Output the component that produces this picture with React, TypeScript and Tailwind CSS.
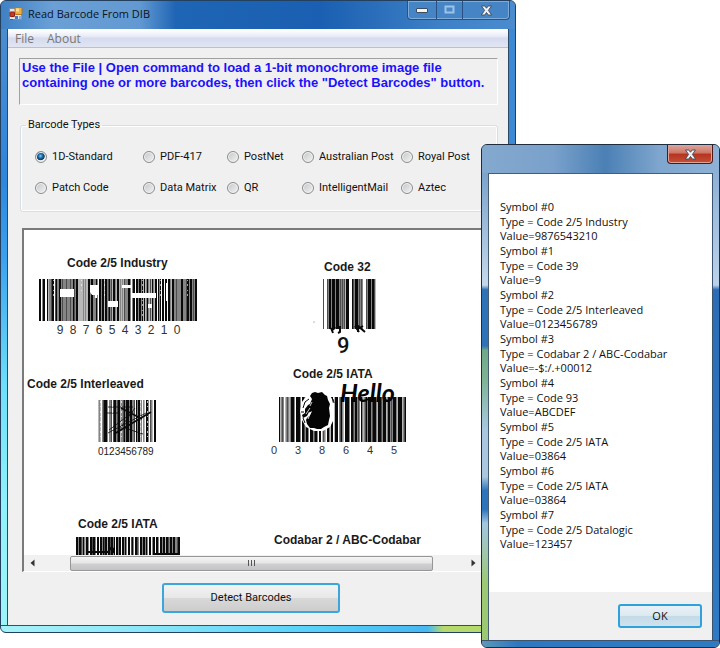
import { useState } from "react"
import { clsx } from "clsx"

const barcodeTypes = [
  "1D-Standard",
  "PDF-417",
  "PostNet",
  "Australian Post",
  "Royal Post",
  "Patch Code",
  "Data Matrix",
  "QR",
  "IntelligentMail",
  "Aztec"
]

const symbols = [
  { type: "Code 2/5 Industry", value: "9876543210" },
  { type: "Code 39", value: "9" },
  { type: "Code 2/5 Interleaved", value: "0123456789" },
  { type: "Codabar 2 / ABC-Codabar", value: "-$:/.+00012" },
  { type: "Code 93", value: "ABCDEF" },
  { type: "Code 2/5 IATA", value: "03864" },
  { type: "Code 2/5 IATA", value: "03864" },
  { type: "Code 2/5 Datalogic", value: "123457" }
]

// one character per column: # black, = dark grey, + grey, - light grey
const shades: Record<string, string> = {
  "#": "#0a0a0a",
  "=": "#4d4d4d",
  "+": "#858585",
  "-": "#b8b8b8"
}

const industry =
  "## +##  #-++=## =#++##+=+++=+++=++#=+##-----+-+--##+##+++#+ ##+##-##+=#+=-##+-##-+-+-=+++##+ +## ##+##+#-#-+#+-=-#+-## #+# ## ## ##+-##++=++++##+++=##+##+=+##"
const code32 = "=   =+##+###+###+=+=+=-###   #=+###+=+=+   =+###+##=-"
const interleaved = "-+- +=###+ ++= =##+=##-++=#+###+##++= #+##-+ +- ##+ =+- ##"
const iata =
  "#-+=+ -+=+-+###+ ####+ ##=+##+ ###+=##+ ## -=+- ##+-## -### +=#+- ####+ ##=+##+=+ #+-+=#+###+=###+-###=+###-+##+=+###+-####-+=#"
const iataBottom =
  "##+##=+#+-##+ ##=##+ ## ##+#=##-##=##+# ##+## ##+#+ ## =#+ ##=+ ##+##+#+ ## +## ##+ ##+##-##=+##+##++=##"

type BarcodeProps = { x: number; y: number; height: number; columns: string }

function Barcode({ x, y, height, columns }: BarcodeProps) {
  return (
    <g shapeRendering="crispEdges">
      {columns.split("").map((column, i) =>
        shades[column] ? (
          <rect key={i} x={x + i} y={y} width={1} height={height} fill={shades[column]} />
        ) : null
      )}
    </g>
  )
}

type DigitsProps = { value: string; x: number; y: number; step: number; size: number }

function Digits({ value, x, y, step, size }: DigitsProps) {
  return (
    <g fontSize={size} textAnchor="middle" fill="#333">
      {value.split("").map((digit, i) => (
        <text key={i} x={x + i * step} y={y}>
          {digit}
        </text>
      ))}
    </g>
  )
}

function ScannedPage() {
  return (
    <svg
      width={457}
      height={325}
      viewBox="0 0 457 325"
      className="block font-['Liberation_Sans',sans-serif]"
      role="img"
      aria-label="Barcodes"
    >
      <g fontSize={12} fontWeight="bold" fill="#1a1a1a">
        <text x={43} y={37}>Code 2/5 Industry</text>
        <text x={300} y={41}>Code 32</text>
        <text x={3} y={158}>Code 2/5 Interleaved</text>
        <text x={269} y={148}>Code 2/5 IATA</text>
        <text x={54} y={298}>Code 2/5 IATA</text>
        <text x={250} y={314}>Codabar 2 / ABC-Codabar</text>
      </g>

      <Barcode x={15} y={49} height={42} columns={industry} />
      <path
        fill="#fff"
        d="M36 59h14v8h-14zM66 55h9v10h-2v3h-2v-3h-3l-2-3zM84 71h10v6h-10zM98 55h10v3h-10zM108 63h24v5h-24zM124 74h4v4h-4zM142 53h2v18h-2z"
      />
      <path
        stroke="#fff"
        strokeDasharray="1 3 2 4"
        opacity={0.6}
        d="M29.5 50v20M57.5 50v14M80.5 50v16M118.500 50v40M136.500 50v20M163.500 50v16"
      />
      <Digits value="9876543210" x={36} y={104} step={13} size={12} />

      <Barcode x={299} y={49} height={50} columns={code32} />
      <path
        fill="none"
        stroke="#0a0a0a"
        strokeWidth={2}
        d="M307 98l2 5M311 97l-2 3M316 96v6l-2 1M331 96l4 6M334 102v-6l7 6M334 99l5-3"
      />
      <circle cx={290} cy={92} r={0.5} fill="#444" />
      <text x={313} y={123} fontSize={22} className="font-['Roboto',sans-serif]" fontWeight={500} fill="#111">
        9
      </text>

      <Barcode x={74} y={170} height={42} columns={interleaved} />
      <g fill="none" stroke="#0a0a0a">
        <path strokeWidth={1.5} d="M90 204l37-22M97 178l21 11" />
        <path strokeWidth={0.8} d="M84 177h25M83 183h12M85 200l24-18M84 203l38-20M101 198l18 6M111 178l-16 22" />
      </g>
      <path
        stroke="#fff"
        strokeDasharray="2 3 1 4"
        opacity={0.7}
        d="M76.500 171v40M88.500 171v40M97.500 171v40M116.500 171v40M123.500 171v40"
      />
      <text x={74} y={225} fontSize={10} fill="#222">0123456789</text>

      <Barcode x={255} y={167} height={45} columns={iata} />
      <path fill="#fff" d="M283 165l-5 7-2 9 2 9 4 7 8 4 9 0 7-4 4-8 0-11-2-9-3-5z" />
      <path
        fill="#050505"
        d="M288 163l3-1 3 1 4-1 3 3 2 1 1 4 2 4-1 4 1 8-1 4-1 5-4 2-3 2-4 0-3-1-4 0-3-4-1-4 1-2 3-3 2-4-3 1-2 4-4 2-1-3 3-2 0-4 3-4 2-1 2-5-2-3z"
      />
      <path
        fill="none"
        stroke="#050505"
        d="M279 178l2-6 4-3M277 182h3M279 188l2 5M285 182l4-2M309 169l1 4"
      />
      <path stroke="#fff" strokeWidth={0.8} d="M282 184l4-6M284 189l3-7M286 176l2-4" />
      <text
        x={316}
        y={172}
        fontSize={25}
        fontStyle="italic"
        fontWeight="bold"
        className="font-['Lato',sans-serif]"
        fill="#050505"
      >
        Hello
      </text>
      <Digits value="038645" x={250} y={224} step={24} size={11} />

      <Barcode x={52} y={307} height={18} columns={iataBottom} />
      <path fill="none" stroke="#0a0a0a" strokeWidth={2} d="M64 322h20l3-4 3 1v4M130 324h25" />
    </svg>
  )
}

function CloseGlyph() {
  return (
    <svg width={13} height={11} viewBox="0 0 13 11" aria-hidden="true">
      <path
        d="M1.500 1h3.300l1.700 2.200L8.200 1h3.300L8.400 5.400l3.300 4.600H8.300L6.500 7.500 4.700 10H1.300l3.300-4.600z"
        fill="#f2f2f2"
        stroke="#3c4a5c"
        strokeWidth={0.9}
      />
    </svg>
  )
}

function AppIcon() {
  return (
    <svg width={14} height={14} viewBox="0 0 14 14" aria-hidden="true">
      <rect x={0.5} y={1.5} width={12} height={11} fill="#dfe6ee" stroke="#7d8ea3" />
      <rect x={6} y={0.5} width={7} height={7} rx={1} fill="#f0b040" stroke="#b87418" />
      <rect x={7} y={1.5} width={3} height={3} fill="#fbe09a" />
      <rect x={1} y={5} width={4.5} height={4.5} rx={0.5} fill="#c93a24" stroke="#8c2012" />
      <rect x={6} y={9} width={3} height={3} fill="#4877c4" />
      <rect x={10} y={9} width={2.5} height={3} fill="#8fb0dd" />
      <path d="M1 12.500h3" stroke="#3b62a8" />
    </svg>
  )
}

function MainWindow() {
  const [selected, setSelected] = useState("1D-Standard")

  return (
    <main className="mr-[204px] flex flex-col overflow-hidden rounded-md border border-[#24405f] bg-[#3f8bd0]">
      <header className="flex h-7 items-start bg-[linear-gradient(to_right,#3f80c4,#6ba0d6_10%,#6299d2_27%,#1f65b5_34%,#1a5fb1_62%,#3d80c6_85%,#4a8cce)] pl-2">
        <h1 className="flex h-[26px] flex-1 items-center gap-[5px] font-['Open_Sans',sans-serif] text-[11px] text-[#0b1420]">
          <AppIcon />
          Read Barcode From DIB
        </h1>
        <div className="mr-[5px] flex h-[19px] rounded-b-[4px] border border-t-0 border-[#2a5184] bg-[#4585c6] shadow-[inset_0_0_0_1px_#7fabd8]">
          <button aria-label="Minimize" className="flex w-[29px] items-center justify-center border-r border-[#2a5184]">
            <svg width={13} height={6} viewBox="0 0 13 6" aria-hidden="true">
              <rect x={0.5} y={1.5} width={11} height={4} rx={0.5} fill="#f5f3ee" stroke="#3e4c60" />
            </svg>
          </button>
          <button aria-label="Maximize" className="flex w-[26px] items-center justify-center border-r border-[#2a5184]">
            <svg width={11} height={10} viewBox="0 0 11 10" aria-hidden="true">
              <rect x={1.5} y={1.5} width={8} height={6} fill="#4a87c4" stroke="#9cc3e8" strokeWidth={2} />
            </svg>
          </button>
          <button aria-label="Close" className="flex w-[46px] items-center justify-center">
            <CloseGlyph />
          </button>
        </div>
      </header>

      <div className="flex">
        <div className="w-[7px] border-r border-[#2b4a68] bg-[linear-gradient(to_bottom,#4a8ccf,#2f86dc_25%,#3aa0ee_38%,#6de0fa_60%,#8ff2fb_80%,#9df4f8)]" />
        <div className="min-w-0 flex-1 bg-[#f0f0f0] pb-3">
          <nav className="flex h-[19px] items-center gap-[13px] border-y border-t-white border-b-[#b9c0d6] bg-[linear-gradient(to_bottom,#fff,#e9ecf7_35%,#d6dbee_50%,#e1e5f3)] pl-[7px] font-['Open_Sans',sans-serif] text-[12px] text-[#777]">
            <button>File</button>
            <button>About</button>
          </nav>

          <p className="mt-[10px] mr-[10px] ml-[11px] h-[47px] border border-t-[#a0a0a0] border-r-white border-b-white border-l-[#a0a0a0] pt-px pl-[2px] font-['Liberation_Sans',Arial,sans-serif] text-[13px] leading-[15px] font-bold text-[#1c10ff]">
            Use the File | Open command to load a 1-bit monochrome image file
            <br />
            containing one or more barcodes, then click the "Detect Barcodes" button.
          </p>

          <fieldset className="mt-3 mr-[10px] ml-3 rounded-[3px] border border-[#d5dfe5] pb-[15px] font-['Roboto',sans-serif] text-[11px] text-[#111] shadow-[inset_0_0_0_1px_#fff]">
            <legend className="ml-[5px] px-[2px] leading-4">Barcode Types</legend>
            <div className="grid grid-cols-[108px_84px_75px_99px_1fr] gap-y-[15px] pt-4 pl-[14px]">
              {barcodeTypes.map((type) => (
                <label key={type} className="flex h-4 items-center gap-[5px] whitespace-nowrap">
                  <input
                    type="radio"
                    name="barcodeType"
                    checked={selected === type}
                    onChange={() => setSelected(type)}
                    className={clsx(
                      "size-3 shrink-0 appearance-none rounded-full border border-[#8a8c8e] shadow-[inset_0_0_0_1px_#f4f4f4]",
                      selected === type
                        ? "bg-[radial-gradient(circle_at_45%_40%,#7fd0f5_0,#1d6fae_25%,#12395c_48%,#e4e8ea_56%)]"
                        : "bg-[linear-gradient(135deg,#c4c6c8,#f3f3f3)]"
                    )}
                  />
                  {type}
                </label>
              ))}
            </div>
          </fieldset>

          <div className="mt-4 ml-[14px] border-t-2 border-b border-l-2 border-[#7a7a7a] border-b-white bg-white">
            <div className="overflow-hidden">
              <ScannedPage />
            </div>
            <div className="flex h-4 items-center bg-[#f1f1f1] pr-8">
              <button aria-label="Scroll left" className="flex w-[46px] pl-[6px]">
                <svg width={5} height={8} viewBox="0 0 5 8" aria-hidden="true">
                  <path d="M4.500 0.500v7L0.500 4z" fill="#333" />
                </svg>
              </button>
              <div className="flex h-[15px] min-w-0 flex-1 items-center justify-center gap-[2px] rounded-[2px] border border-[#969696] bg-[linear-gradient(to_bottom,#f4f4f4,#e6e6e6_48%,#d0d0d2_52%,#c3c4c6)]">
                <span className="h-[6px] w-px bg-[#555]" />
                <span className="h-[6px] w-px bg-[#555]" />
                <span className="h-[6px] w-px bg-[#555]" />
              </div>
              <button aria-label="Scroll right" className="flex w-[43px] justify-end">
                <svg width={5} height={8} viewBox="0 0 5 8" aria-hidden="true">
                  <path d="M0.500 0.500v7l4-3.500z" fill="#333" />
                </svg>
              </button>
            </div>
          </div>

          <div className="mt-[11px] flex justify-center pr-[14px]">
            <button className="h-[30px] w-[178px] rounded-[3px] border-2 border-[#3ba6dc] bg-[linear-gradient(to_bottom,#f3f3f3,#e8e8e8_48%,#d8d8d8_52%,#cdcdcd)] font-['Roboto',sans-serif] text-[11px] text-[#111]">
              Detect Barcodes
            </button>
          </div>
        </div>
        <div className="w-[7px] border-l border-[#2b4a68] bg-[#3d8ad2]" />
      </div>
      <div className="h-[7px] border-t border-[#2b5468] bg-[linear-gradient(to_right,#a5f3f8,#8fe8f8_25%,#58d2fa_60%,#46b8f2_83%,#b5d96b_86%,#b5d96b)]" />
    </main>
  )
}

function ResultDialog() {
  return (
    <div
      role="dialog"
      aria-label="Detected symbols"
      className="absolute top-36 right-0 flex w-[239px] flex-col overflow-hidden rounded-md border border-[#1f2c3d] bg-[#7ba3cc]"
    >
      <div className="flex h-7 items-start justify-end bg-[linear-gradient(to_right,#84a9cf,#7aa1cb_30%,#4b80b5_52%,#7fa6ce_75%,#8fb1d6)] pr-[6px]">
        <button
          aria-label="Close"
          className="flex h-[19px] w-[46px] items-center justify-center rounded-b-[4px] border border-t-0 border-[#4a1a1a] bg-[linear-gradient(to_bottom,#dba59c,#cf7566_45%,#b5331f_50%,#c4513a)] shadow-[inset_0_0_0_1px_#e0a398]"
        >
          <CloseGlyph />
        </button>
      </div>

      <div className="flex">
        <div className="w-[7px] border-r border-[#4a5d70] bg-[linear-gradient(to_bottom,#7ba3cc,#c5d9ea_24%,#2e72b8_25%,#2e72b8_37%,#6fa98a_38%,#7db393_44%,#a9c8e0_55%,#a9c8e0_65%,#2c74bc_68%,#2c74bc_72%,#a3c6e0_75%,#9cc873_88%,#9cc873)]" />
        <div className="min-w-0 flex-1 border-t border-[#4a5d70] bg-white font-['Open_Sans',sans-serif] text-[11px] text-[#111]">
          <ul className="px-[11px] pt-[25px] pb-[41px]">
            {symbols.map((symbol, i) => (
              <li key={i} className="leading-[15px] whitespace-nowrap">
                <p>Symbol #{i}</p>
                <p>Type = {symbol.type}</p>
                <p className="leading-[14px]">Value={symbol.value}</p>
              </li>
            ))}
          </ul>
          <div className="flex justify-end bg-[#f0f0f0] px-[10px] py-3">
            <button className="h-6 w-[84px] rounded-[3px] border-2 border-[#2fa2dc] bg-[linear-gradient(to_bottom,#e9f2f7,#dce9f0_48%,#c4dbe7_52%,#cfe2ec)]">
              OK
            </button>
          </div>
        </div>
        <div className="w-[7px] border-l border-[#3a5470] bg-[linear-gradient(to_bottom,#8fb1d6,#bcd2ea_24%,#2a6db5_25%,#2f7ac2)]" />
      </div>
      <div className="h-[7px] border-t border-[#3a5470] bg-[linear-gradient(to_right,#5c98b8,#2f78c0_15%,#2f7ac2)]" />
    </div>
  )
}

export default function App() {
  return (
    <div className="relative min-h-screen bg-white">
      <MainWindow />
      <ResultDialog />
    </div>
  )
}
